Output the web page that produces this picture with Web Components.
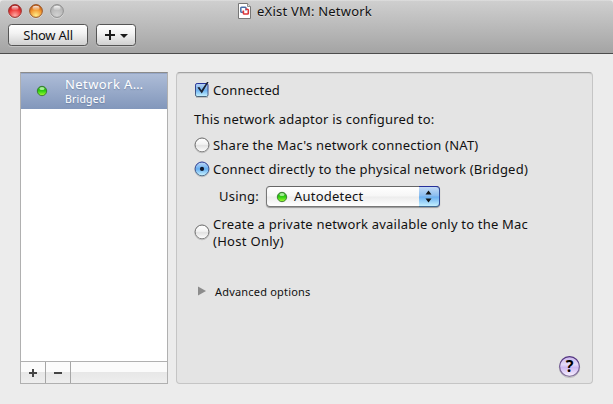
<!DOCTYPE html>
<html lang="en"><head><meta charset="utf-8"><title>eXist VM: Network</title>
<style>
html,body{margin:0;height:404px;overflow:hidden;background:#ececec}
body{font:13px/17px "Noto Sans","Open Sans",sans-serif;color:#111}
</style></head><body>
<network-window></network-window>
<script>
const define=(name,html,after)=>customElements.define(name,class extends HTMLElement{
  constructor(){super();this.attachShadow({mode:'open'}).innerHTML=html;}
  connectedCallback(){if(after)after(this);}
});

/* A single line of text whose tracking is adjusted to fill the given width. */
define('text-line',`<style>:host{display:block;white-space:nowrap;flex:none}span{display:inline-block}</style><span><slot></slot></span>`,el=>{
  const s=el.shadowRoot.querySelector('span');
  const target=+el.getAttribute('w'),n=el.textContent.length;
  s.style.letterSpacing=(target-s.getBoundingClientRect().width)/n+'px';
});

define('traffic-light',`<style>
:host{display:block;width:14px;height:14px}svg{display:block}
.rim{stop-color:var(--rim)}.mid{stop-color:var(--mid)}.low{stop-color:var(--low)}</style>
<svg width="14" height="15" viewBox="0 0 14 15"><defs><radialGradient id="g" cx=".5" cy=".85" r=".85"><stop offset="0" class="low"/><stop offset=".55" class="mid"/><stop offset="1" class="rim"/></radialGradient><linearGradient id="h" x2="0" y2="1"><stop stop-color="#fff" stop-opacity=".9"/><stop offset="1" stop-color="#fff" stop-opacity=".1"/></linearGradient></defs>
<circle cx="7" cy="7.9" r="6.5" fill="none" stroke="#fff" stroke-opacity=".4"/><circle cx="7" cy="7" r="6.4" fill="url(#g)" stroke="var(--edge)" stroke-width="1"/><ellipse cx="7" cy="3.9" rx="3.5" ry="2.2" fill="url(#h)"/></svg>`);

define('tool-button',`<style>
:host{display:flex;box-sizing:border-box;height:22px;border:1px solid #555;border-radius:3.5px;background:linear-gradient(#fff,#f3f3f3 40%,#d0d0d0);box-shadow:0 1px 0 #ffffff50;align-items:center;justify-content:center}</style><slot></slot>`);

define('title-bar',`<style>
:host{display:block;box-sizing:border-box;height:54px;border-bottom:1px solid #4c4c4c;background:linear-gradient(#e6e6e6 0,#cfcfcf 1px,#a4a4a4 53px);border-radius:4px 4px 0 0}
.top{display:grid;grid-template-columns:238px 1fr;height:24px}
.lights{display:flex;gap:7px;padding:4px 0 0 8px}
.title{display:flex;gap:6px;padding-top:3px;text-shadow:0 1px 0 #ffffff60}
.tools{display:flex;gap:8px;padding-left:8px}
.show{width:80px}.add{width:40px}</style>
<div class="top"><div class="lights">
<traffic-light style="--rim:#a60d0e;--mid:#ee3d3c;--low:#ffaaa4;--edge:#983632"></traffic-light>
<traffic-light style="--rim:#b44708;--mid:#f39a32;--low:#ffee8a;--edge:#98592b"></traffic-light>
<traffic-light style="--rim:#adadad;--mid:#bdbdbd;--low:#d2d2d2;--edge:#8e8e8e"></traffic-light></div>
<div class="title"><svg width="13" height="16" viewBox="0 0 13 16"><path d="M.5.5h9l3 3v12H.5z" fill="#fff" stroke="#777"/><path d="M9.5.5v3h3" fill="#ddd" stroke="#777" stroke-width=".8"/><path d="M6 9.2H3.6a.8.8 0 0 1-.8-.8V5a.8.8 0 0 1 .8-.8h3.6a.8.8 0 0 1 .8.8v2.4" fill="none" stroke="#4b70aa" stroke-width="1.5"/><path d="M7.6 6.3h1.9a.8.8 0 0 1 .8.8v3.1a.8.8 0 0 1-.8.8H6.2a.8.8 0 0 1-.8-.8V7.6" fill="none" stroke="#dc3539" stroke-width="1.6"/></svg><text-line w="115">eXist VM: Network</text-line></div></div>
<div class="tools"><tool-button class="show"><text-line w="49.5">Show All</text-line></tool-button>
<tool-button class="add"><svg width="38" height="20" viewBox="0 0 38 20"><path d="M8 10h10M13 5v10" stroke="#1a1a1a" stroke-width="2"/><path d="M23 9h8l-4 4z" fill="#1a1a1a"/></svg></tool-button></div>`);

define('status-light',`<style>:host{display:block;width:12px;height:12px;flex:none}svg{display:block}</style>
<svg width="12" height="12" viewBox="0 0 12 12"><defs><linearGradient id="g" x2="0" y2="1"><stop stop-color="#1b9c12"/><stop offset=".5" stop-color="#2fd011"/><stop offset="1" stop-color="#a8ff35"/></linearGradient></defs><circle cx="6" cy="6" r="4.7" fill="url(#g)" stroke="#36762c" stroke-width=".9"/><ellipse cx="6" cy="3.6" rx="2.6" ry="1.5" fill="#d2ffc4" opacity=".75"/></svg>`);

define('adaptor-list',`<style>
:host{display:flex;flex-direction:column;box-sizing:border-box;width:148px;height:312px;border:1px solid #b0b0b0;border-top-color:#8b8b8b;background:#fff;flex:none}
.item{display:flex;height:36px;background:linear-gradient(#7f92b7 0,#adbcd7 1px,#8297bb);color:#fff;text-shadow:0 1px 1px #536a9080}
.item status-light{margin:12px 17px 0 15px}
.small{font-size:10.5px;line-height:14px;margin-top:-1px}
.name{padding-top:3px}
.bar{margin-top:auto;display:flex;height:21px;border-top:1px solid #b0b0b0;background:linear-gradient(#fbfbfb 50%,#e7e7e7 50%,#eeeeee)}
.bar div{width:24px;border-right:1px solid #a6a6a6}svg{display:block}</style>
<div class="item"><status-light></status-light><div class="name"><text-line w="78.5">Network A…</text-line><text-line class="small" w="40.5">Bridged</text-line></div></div>
<div class="bar"><div><svg width="24" height="21"><path d="M8 11h8M12 7v8" stroke="#454545" stroke-width="2"/></svg></div><div><svg width="24" height="21"><path d="M8 11h8" stroke="#454545" stroke-width="2"/></svg></div></div>`);

define('check-mark',`<style>:host{display:block;width:19px;flex:none}svg{display:block;overflow:visible}</style>
<svg width="17" height="18" viewBox="0 0 17 18"><defs><linearGradient id="g" x2="0" y2="1"><stop stop-color="#b9d3f3"/><stop offset=".45" stop-color="#7db4ec"/><stop offset=".55" stop-color="#70b5f1"/><stop offset="1" stop-color="#cbf5ff"/></linearGradient><linearGradient id="e" x2="0" y2="1"><stop stop-color="#26339a"/><stop offset="1" stop-color="#4c647b"/></linearGradient></defs><path d="M2 16.3h12" stroke="#888" opacity=".5"/><rect x="1.5" y="2.5" width="12.5" height="13" rx="1.6" fill="url(#g)" stroke="url(#e)"/><path d="M3.4 6.6L5.4 6l2 3.2L13 .9l1.6.2-6.8 11.5z" fill="#1c2230"/></svg>`);

define('radio-mark',`<style>:host{display:block;width:19px;flex:none}svg{display:block;overflow:visible}
.on{display:none}:host([checked]) .on{display:block}:host([checked]) .off{display:none}</style>
<svg width="17" height="17" viewBox="0 0 17 17"><defs><linearGradient id="w" x2="0" y2="1"><stop stop-color="#fff"/><stop offset=".45" stop-color="#f3f3f3"/><stop offset=".55" stop-color="#e2e2e2"/><stop offset="1" stop-color="#fff"/></linearGradient><linearGradient id="b" x2="0" y2="1"><stop stop-color="#c2d9f6"/><stop offset=".5" stop-color="#66aef0"/><stop offset="1" stop-color="#cef6ff"/></linearGradient><linearGradient id="e" x2="0" y2="1"><stop stop-color="#253494"/><stop offset="1" stop-color="#53708b"/></linearGradient><linearGradient id="k" x2="0" y2="1"><stop stop-color="#666"/><stop offset="1" stop-color="#858585"/></linearGradient></defs>
<circle cx="8" cy="8.6" r="7.2" fill="none" stroke="#777" opacity=".3"/>
<circle class="off" cx="8" cy="7.9" r="6.9" fill="url(#w)" stroke="url(#k)"/><g class="on"><circle cx="8" cy="7.9" r="6.9" fill="url(#b)" stroke="url(#e)"/><circle cx="8" cy="7.9" r="2.1" fill="#10182c"/></g></svg>`);

define('popup-button',`<style>
:host{display:flex;position:relative;box-sizing:border-box;width:174px;height:21px;border:1px solid #777;border-top-color:#666;border-radius:4px;background:linear-gradient(#fff,#f6f6f6 48%,#ececec 52%,#fff);box-shadow:0 1px 1px #0005;align-items:center}
.arrows{box-sizing:border-box;margin:-1px -1px -1px auto;width:21px;height:21px;border:1px solid #416990;border-top-color:#26309a;border-right-color:#2e4a96;border-left:0;border-radius:0 4px 4px 0;background:linear-gradient(#c4dbf6,#89bcef 48%,#6aaff0 52%,#c4f0ff)}svg{display:block}</style>
<slot></slot><div class="arrows"><svg width="20" height="19"><path d="M6.5 7.5L9.5 3.5l3 4zM6.5 11.5h6l-3 4z" fill="#111"/></svg></div>`);

define('help-button',`<style>:host{display:block;width:23px;height:24px}svg{display:block}text{font:bold 16px "Noto Sans",sans-serif}</style>
<svg width="23" height="24" viewBox="0 0 23 24"><defs><linearGradient id="g" x2="0" y2="1"><stop stop-color="#c9b5ec"/><stop offset=".4" stop-color="#e4daf8"/><stop offset=".55" stop-color="#cdb8f2"/><stop offset="1" stop-color="#fbf4ff"/></linearGradient><linearGradient id="e" x2="0" y2="1"><stop stop-color="#51327f"/><stop offset="1" stop-color="#89789f"/></linearGradient></defs><circle cx="11.5" cy="12.4" r="10.2" fill="none" stroke="#777" opacity=".35"/><circle cx="11.5" cy="11.5" r="9.9" fill="url(#g)" stroke="url(#e)" stroke-width="1.1"/><text x="11.5" y="17.2" text-anchor="middle" fill="#000">?</text></svg>`);

define('settings-panel',`<style>
:host{display:flex;flex-direction:column;box-sizing:border-box;flex:1;height:312px;border:1px solid #c5c5c5;border-top-color:#a2a2a2;border-radius:4px;background:#e4e4e4;padding:8px 11px 4px 17px;box-shadow:inset 0 1px 0 #d5d5d5}
.row{display:flex;align-items:center;height:18px;flex:none}
.using{height:21px;margin:8px 0 0 25px}
.using popup-button{margin-left:7px}
.using status-light{margin:0 6px 0 9px}
.host{height:34px;margin-top:9px}
.host radio-mark{margin-top:-1px}
.adv{font-size:11px;margin-top:32px}
.adv svg{margin:0 9px 0 4px}
help-button{margin:auto 0 0 auto}</style>
<div class="row"><check-mark></check-mark><text-line w="67">Connected</text-line></div>
<div class="row" style="margin-top:11px"><text-line w="240.5">This network adaptor is configured to:</text-line></div>
<div class="row" style="margin-top:8px"><radio-mark></radio-mark><text-line w="265.5">Share the Mac's network connection (NAT)</text-line></div>
<div class="row" style="margin-top:6px"><radio-mark checked></radio-mark><text-line w="315">Connect directly to the physical network (Bridged)</text-line></div>
<div class="row using"><text-line w="40">Using:</text-line><popup-button><status-light></status-light><text-line w="69.5">Autodetect</text-line></popup-button></div>
<div class="row host"><radio-mark></radio-mark><div><text-line w="315">Create a private network available only to the Mac</text-line><text-line w="71">(Host Only)</text-line></div></div>
<div class="row adv"><svg width="8" height="10"><path d="M0 .5l8 4.5-8 4.5z" fill="#8c8c8c"/></svg><text-line w="95.5">Advanced options</text-line></div>
<help-button></help-button>`);

define('network-window',`<style>
:host{display:block;width:613px;height:404px;background:#ececec}
main{display:flex;gap:8px;padding:18px 20px 20px}</style>
<title-bar></title-bar><main><adaptor-list></adaptor-list><settings-panel></settings-panel></main>`);
</script></body></html>
